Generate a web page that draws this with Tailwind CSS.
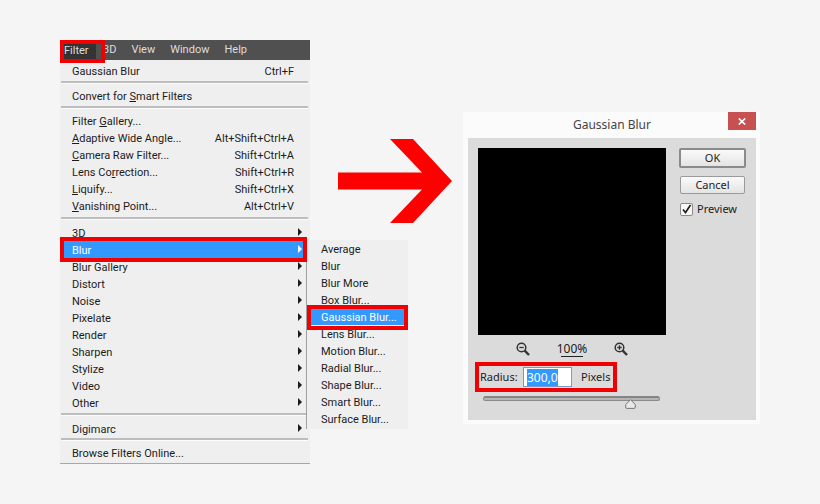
<!DOCTYPE html>
<html lang="en">
<head>
  <meta charset="UTF-8" />
  <meta name="viewport" content="width=device-width, initial-scale=1.0"/>
  <title>Gaussian Blur</title>
  <script src="https://cdn.jsdelivr.net/npm/@tailwindcss/browser@4"></script>
  <style>
    body {
      font-family: Roboto, 'Open Sans', sans-serif;
    }
    .separator {
      height: 3px;
      margin: 0 2px 0 1px;
      border: 0;
      border-bottom: 1px solid #fcfcfc;
      background: #bdbdbd;
    }
    .menu button {
      display: flex;
      width: 100%;
      height: 17px;
      padding-top: 2px;
      align-items: center;
      justify-content: space-between;
      line-height: 15px;
      white-space: nowrap;
    }
    .menu .arrow::after {
      content: '';
      border: 4px solid transparent;
      border-left-color: currentColor;
      border-right: 0;
      margin-top: -4px;
      margin-right: -8px;
    }
    .check {
      appearance: none;
      background: #f7f7f7;
    }
    .check:checked {
      background: #f7f7f7 url("data:image/svg+xml,%3Csvg xmlns='http://www.w3.org/2000/svg' viewBox='0 0 11 11'%3E%3Cpath d='M2 5.5l2.5 3L9.5 1' fill='none' stroke='%23222' stroke-width='1.7'/%3E%3C/svg%3E") no-repeat center;
    }
    .slider {
      appearance: none;
      background: transparent;
    }
    .slider::-webkit-slider-runnable-track {
      height: 5px;
      border: 1px solid #8b8b8b;
      border-top: 2px solid #858585;
      border-radius: 3px;
      background: #b5b5b5;
    }
    .slider::-webkit-slider-thumb {
      appearance: none;
      width: 11px;
      height: 10px;
      margin-top: 1px;
      background: url("data:image/svg+xml,%3Csvg xmlns='http://www.w3.org/2000/svg' viewBox='0 0 11 10'%3E%3Cpath d='M5.5 .8L10.3 5.5V8.2Q10.3 9.4 9 9.4H2Q.7 9.4 .7 8.2V5.5Z' fill='%23e8e8e8' stroke='%23777'/%3E%3C/svg%3E") no-repeat;
    }
    #radius::selection {
      background: #3399ff;
      color: #fff;
    }
  </style>
</head>
<body class="min-h-screen bg-[#f5f5f5] text-[11px] text-[#1c1c1c]">
  <main class="flex items-start pt-10 pl-[60px]">

    <!-- Filter menu -->
    <div class="w-[250px] shrink-0 border-b border-[#a8a8a8] bg-[#efefef]">
      <nav class="relative flex h-5 items-center gap-[15px] bg-[#505050] leading-[22px] text-[#dedede]">
        <button class="-mr-2 h-5 w-9 bg-[#333] pl-1 text-left">Filter</button>
        <button>3D</button>
        <button>View</button>
        <button>Window</button>
        <button>Help</button>
        <span class="pointer-events-none absolute top-0 left-0 h-[23px] w-[45px] border-4 border-[#f00000]"></span>
      </nav>

      <div class="menu">
        <ul class="pt-[2px] pr-4 pb-[2px] pl-3">
          <li><button><span>Gaussian Blur</span><span>Ctrl+F</span></button></li>
        </ul>
        <hr class="separator">
        <ul class="pt-[3px] pr-4 pb-[2px] pl-3">
          <li><button><span>Convert for <u>S</u>mart Filters</span></button></li>
        </ul>
        <hr class="separator">
        <ul class="pt-[3px] pr-4 pb-[3px] pl-3">
          <li><button><span>Filter <u>G</u>allery...</span></button></li>
          <li><button><span><u>A</u>daptive Wide Angle...</span><span>Alt+Shift+Ctrl+A</span></button></li>
          <li><button><span><u>C</u>amera Raw Filter...</span><span>Shift+Ctrl+A</span></button></li>
          <li><button><span>Lens Co<u>r</u>rection...</span><span>Shift+Ctrl+R</span></button></li>
          <li><button><span><u>L</u>iquify...</span><span>Shift+Ctrl+X</span></button></li>
          <li><button><span><u>V</u>anishing Point...</span><span>Alt+Ctrl+V</span></button></li>
        </ul>
        <hr class="separator">
        <ul class="pt-1 pb-[2px]">
          <li class="pr-4 pl-3"><button class="arrow">3D</button></li>
          <li class="relative">
            <div class="bg-[#3399ff] pr-4 pl-3 text-white"><button class="arrow">Blur</button></div>
            <span class="pointer-events-none absolute -top-1 left-0 z-10 h-[25px] w-[247px] border-4 border-[#f00000]"></span>

            <!-- Blur submenu -->
            <ul class="absolute -top-px left-[246px] w-[102px] border-l border-[#a0a0a0] bg-[#efefef] pb-[2px]">
              <li class="pl-[14px]"><button>Average</button></li>
              <li class="pl-[14px]"><button>Blur</button></li>
              <li class="pl-[14px]"><button>Blur More</button></li>
              <li class="pl-[14px]"><button>Box Blur...</button></li>
              <li class="relative bg-[#3399ff] pl-[14px] text-white">
                <button>Gaussian Blur...</button>
                <span class="pointer-events-none absolute -top-[3px] left-0 h-[25px] w-[101px] border-4 border-[#f00000]"></span>
              </li>
              <li class="pl-[14px]"><button>Lens Blur...</button></li>
              <li class="pl-[14px]"><button>Motion Blur...</button></li>
              <li class="pl-[14px]"><button>Radial Blur...</button></li>
              <li class="pl-[14px]"><button>Shape Blur...</button></li>
              <li class="pl-[14px]"><button>Smart Blur...</button></li>
              <li class="pl-[14px]"><button>Surface Blur...</button></li>
            </ul>
          </li>
          <li class="pr-4 pl-3"><button class="arrow">Blur Gallery</button></li>
          <li class="pr-4 pl-3"><button class="arrow">Distort</button></li>
          <li class="pr-4 pl-3"><button class="arrow">Noise</button></li>
          <li class="pr-4 pl-3"><button class="arrow">Pixelate</button></li>
          <li class="pr-4 pl-3"><button class="arrow">Render</button></li>
          <li class="pr-4 pl-3"><button class="arrow">Sharpen</button></li>
          <li class="pr-4 pl-3"><button class="arrow">Stylize</button></li>
          <li class="pr-4 pl-3"><button class="arrow">Video</button></li>
          <li class="pr-4 pl-3"><button class="arrow">Other</button></li>
        </ul>
        <hr class="separator">
        <ul class="pt-1 pr-4 pb-px pl-3">
          <li><button class="arrow">Digimarc</button></li>
        </ul>
        <hr class="separator">
        <ul class="pt-[3px] pr-4 pb-[2px] pl-3">
          <li><button>Browse Filters Online...</button></li>
        </ul>
      </div>
    </div>

    <svg class="mt-[99px] ml-7 h-[84px] w-[114px] shrink-0" viewBox="0 0 114 84" fill="#ff0000">
      <path d="M0 33.500H84L52 0H75L114 42L75 84H52L84 50.500H0Z" />
    </svg>

    <!-- Gaussian Blur dialog -->
    <section class="mt-[72px] ml-[11px] w-[297px] shrink-0 bg-[#fbfbfb] pr-1 pb-1 pl-[5px]">
      <header class="relative flex h-[26px] items-center justify-center font-['Noto_Sans'] text-[12px] text-[#444]">
        <h1>Gaussian Blur</h1>
        <button aria-label="Close" class="absolute top-0 right-0 flex h-[18px] w-7 items-center justify-center bg-[#c75050]">
          <svg class="h-[7px] w-2" viewBox="0 0 8 7" stroke="#fff" stroke-width="1.700"><path d="M.8.500L7.200 6.500M7.200.500L.8 6.500" /></svg>
        </button>
      </header>
      <div class="flex h-[282px] gap-[13px] bg-[#dbdbdb] pt-[10px] pr-[9px] pl-[10px] font-['Noto_Sans']">
        <div class="w-[188px] shrink-0">
          <div class="h-[187px] bg-black"></div>
          <div class="flex h-[27px] items-center justify-between px-[38px]">
            <button aria-label="Zoom out">
              <svg class="h-[14px] w-[14px]" viewBox="0 0 14 14" fill="none" stroke="#333"><circle cx="5.500" cy="5.500" r="4.300" stroke-width="1.500" /><path d="M3.300 5.500H7.700" stroke-width="1.300" /><path d="M8.700 8.700L13 13" stroke-width="2.400" /></svg>
            </button>
            <span class="relative text-[12px] leading-4">100%<span class="absolute right-1 bottom-0 left-1 h-px bg-[#222]"></span></span>
            <button aria-label="Zoom in">
              <svg class="h-[14px] w-[14px]" viewBox="0 0 14 14" fill="none" stroke="#333"><circle cx="5.500" cy="5.500" r="4.300" stroke-width="1.500" /><path d="M3.300 5.500H7.700M5.500 3.300V7.700" stroke-width="1.300" /><path d="M8.700 8.700L13 13" stroke-width="2.400" /></svg>
            </button>
          </div>
          <div class="-ml-[3px] flex h-[30px] w-[142px] items-center border-4 border-[#f00000]">
            <label for="radius" class="w-[44px] pl-px">Radius:</label>
            <input id="radius" type="text" value="300,0" class="h-5 w-[49px] border border-[#6f9ccb] bg-white pl-[3px] text-[12px] outline-none">
            <span class="pl-[9px]">Pixels</span>
          </div>
          <input type="range" aria-label="Radius" min="0" max="100" value="86" class="slider ml-[5px] block h-[13px] w-[177px]">
        </div>
        <div class="flex w-[67px] flex-col">
          <button class="h-5 rounded-xs border-2 border-[#8a8a8a] bg-linear-to-b from-[#fafafa] to-[#e4e4e4] leading-4">OK</button>
          <button class="mx-px mt-2 h-[18px] rounded-xs border border-[#9a9a9a] bg-linear-to-b from-[#fafafa] to-[#e4e4e4] leading-4">Cancel</button>
          <label class="mt-[7px] ml-px flex h-4 items-center gap-1"><input type="checkbox" checked class="check h-[13px] w-[13px] shrink-0 rounded-xs border border-[#8a8a8a]">Preview</label>
        </div>
      </div>
    </section>
  </main>

  <script>
    const radius = document.getElementById('radius');
    radius.focus();
    radius.select();
  </script>
</body>
</html>
